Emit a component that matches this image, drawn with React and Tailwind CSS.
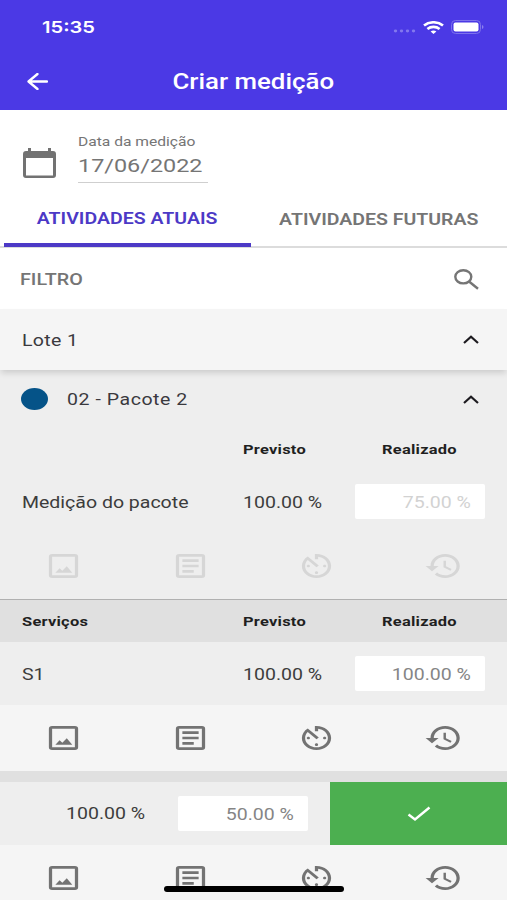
import React from 'react';
import clsx from 'clsx';

/**
 * A single line of text in the wide face used all over the app.
 */
function Label({children, className}) {
  return (
    <span className={clsx('inline-block whitespace-nowrap scale-x-[1.219] leading-none', className)}>{children}</span>
  );
}

function ImageIcon() {
  return (
    <svg className="w-[39px] h-8" viewBox="0 0 24 24" preserveAspectRatio="none" fill="currentColor">
      <path
        fillRule="evenodd"
        d="M5 3h14a2 2 0 0 1 2 2v14a2 2 0 0 1-2 2H5a2 2 0 0 1-2-2V5a2 2 0 0 1 2-2zm0 2v14h14V5H5z"
      />
      <path d="M7 17l2.6-3.4 1.7 1.9 2.7-3.4 3.4 4.9z" />
    </svg>
  );
}

function ArticleIcon() {
  return (
    <svg className="w-[39px] h-8" viewBox="0 0 24 24" preserveAspectRatio="none" fill="currentColor">
      <path
        fillRule="evenodd"
        d="M5 3h14a2 2 0 0 1 2 2v14a2 2 0 0 1-2 2H5a2 2 0 0 1-2-2V5a2 2 0 0 1 2-2zm0 2v14h14V5H5z"
      />
      <path d="M7 7h10v2H7zM7 11h10v2H7zM7 15h7v2H7z" />
    </svg>
  );
}

function TimerIcon() {
  return (
    <svg className="w-[39px] h-8" viewBox="0 0 24 24" preserveAspectRatio="none" fill="currentColor">
      <path d="M11 17c0 .55.45 1 1 1s1-.45 1-1-.45-1-1-1-1 .45-1 1zm0-14v4h2V5.08c3.39.49 6 3.39 6 6.92 0 3.87-3.13 7-7 7s-7-3.13-7-7c0-1.68.59-3.22 1.58-4.42L12 13l1.41-1.41-6.8-6.8v.02C4.42 6.45 3 9.05 3 12c0 4.97 4.02 9 9 9 4.97 0 9-4.03 9-9s-4.03-9-9-9h-1zm7 9c0-.55-.45-1-1-1s-1 .45-1 1 .45 1 1 1 1-.45 1-1zM6 12c0 .55.45 1 1 1s1-.45 1-1-.45-1-1-1-1 .45-1 1z" />
    </svg>
  );
}

function HistoryIcon() {
  return (
    <svg className="w-[39px] h-8" viewBox="0 0 24 24" preserveAspectRatio="none" fill="currentColor">
      <path d="M13 3c-4.97 0-9 4.03-9 9H1l3.89 3.89.07.14L9 12H6c0-3.87 3.13-7 7-7s7 3.13 7 7-3.13 7-7 7c-1.93 0-3.68-.79-4.94-2.06l-1.42 1.42C8.27 19.99 10.51 21 13 21c4.97 0 9-4.03 9-9s-4.03-9-9-9zm-1 5v5l4.28 2.54.72-1.21-3.5-2.08V8H12z" />
    </svg>
  );
}

function ChevronUp() {
  return (
    <svg className="w-4 h-[9px] mr-7" viewBox="0 0 16 9" fill="none" stroke="#1d1b20" strokeWidth="2.2">
      <path d="M1 8l7-6.2L15 8" />
    </svg>
  );
}

function Actions({className}) {
  return (
    <div className={clsx('grid grid-cols-4 place-items-center shrink-0', className)}>
      <ImageIcon />
      <ArticleIcon />
      <TimerIcon />
      <HistoryIcon />
    </div>
  );
}

function ColumnTitles({title, className}) {
  return (
    <div
      className={clsx(
        'flex items-center shrink-0 pl-[22px] pt-px text-[13.5px] tracking-[0.2px] font-bold text-[#1f1f1f]',
        className,
      )}
    >
      <div className="w-[221px]">
        <Label className="origin-left">{title}</Label>
      </div>
      <div className="w-[139px]">
        <Label className="origin-left">Previsto</Label>
      </div>
      <Label className="origin-left">Realizado</Label>
    </div>
  );
}

function Amount({value, disabled}) {
  return (
    <div
      className={clsx(
        'flex items-center justify-end w-[130px] h-[35px] pt-0.5 pr-3.5 bg-white rounded-xs text-[16px]',
        disabled ? 'text-[#d2d2d2]' : 'text-[#858585]',
      )}
    >
      <Label className="origin-right">{value}</Label>
    </div>
  );
}

function Measure({name, planned, done, disabled, className}) {
  return (
    <div className={clsx('flex items-center shrink-0 pl-[22px] text-[16px] text-[#3c3c3c]', className)}>
      <div className="w-[221px] pt-0.5">
        <Label className="origin-left">{name}</Label>
      </div>
      <div className="w-[112px] pt-0.5">
        <Label className="origin-left">{planned}</Label>
      </div>
      <Amount value={done} disabled={disabled} />
    </div>
  );
}

function Header() {
  return (
    <header className="h-[110px] shrink-0 bg-[#4b39e5] text-white">
      <div className="flex items-center justify-between h-[54px] pl-[42px] pr-[23px]">
        <Label className="origin-left pt-px font-['Inter'] font-semibold text-[16.5px]">15:35</Label>
        <div className="flex items-center">
          <svg className="w-6 h-3 mt-1 mr-1.5" viewBox="0 0 24 12" fill="#8378ee">
            <ellipse cx="2.500" cy="8" rx="1.700" ry="1.400" />
            <ellipse cx="8.500" cy="8" rx="1.700" ry="1.400" />
            <ellipse cx="14.500" cy="8" rx="1.700" ry="1.400" />
            <ellipse cx="20.500" cy="8" rx="1.700" ry="1.400" />
          </svg>
          <svg className="w-[21px] h-[13px] mr-[7px]" viewBox="0 0 21 13" fill="none" stroke="white" strokeWidth="2.6">
            <path d="M1 4.500C6.200.2 14.800.2 20 4.500" />
            <path d="M4.400 8c3.500-2.800 8.700-2.800 12.200 0" />
            <path d="M7.600 10.500c1.800-1.300 4-1.300 5.800 0L10.500 13z" fill="white" stroke="none" />
          </svg>
          <svg className="w-[33px] h-[14px]" viewBox="0 0 33 14">
            <rect x=".5" y=".5" width="29" height="13" rx="4" fill="none" stroke="#7d71ec" />
            <rect x="2.5" y="2.5" width="25" height="9" rx="2" fill="white" />
            <path d="M31 5c2 .7 2 3.300 0 4z" fill="#8b80ee" />
          </svg>
        </div>
      </div>
      <div className="grid grid-cols-[1fr_auto_1fr] items-center h-[54px]">
        <svg
          className="w-[21px] h-[17px] ml-[27px]"
          viewBox="0 0 21 17"
          fill="none"
          stroke="white"
          strokeWidth="2.3"
          strokeLinecap="round"
          strokeLinejoin="round"
        >
          <path d="M20 8.500H1.500M10.500 1L1.500 8.500l9 7.500" />
        </svg>
        <Label className="pt-0.5 text-[21.200px] font-medium">Criar medição</Label>
      </div>
    </header>
  );
}

export default function App() {
  return (
    <div className="relative flex flex-col w-[507px] h-[900px] overflow-hidden bg-white font-['Roboto',sans-serif]">
      <Header />

      <div className="flex h-[77px] shrink-0 pl-[23px]">
        <svg className="w-[33px] h-[30px] mt-[38px]" viewBox="0 0 33 30" fill="#727272">
          <path
            fillRule="evenodd"
            d="M5 0h3v3h17V0h3v3h2a3 3 0 0 1 3 3v21a3 3 0 0 1-3 3H3a3 3 0 0 1-3-3V6a3 3 0 0 1 3-3h2zM3 10v17.500h27V10z"
          />
        </svg>
        <div className="flex flex-col w-[130px] h-[73px] ml-[22px] pt-[26px] border-b border-[#cfcfcf] text-[#757575]">
          <Label className="origin-left self-start text-[12.8px]">Data da medição</Label>
          <Label className="origin-left self-start mt-[7px] text-[19.2px]">17/06/2022</Label>
        </div>
      </div>

      <div className="flex h-[61px] shrink-0 border-b-2 border-[#dcdcdc] text-[16px] font-semibold">
        <div className="flex justify-center w-[247px] h-[60px] ml-1 pt-6 border-b-4 border-[#4c39c6] text-[#4c39c6]">
          <Label>ATIVIDADES ATUAIS</Label>
        </div>
        <div className="flex justify-center grow pt-[25px] text-[#757575]">
          <Label>ATIVIDADES FUTURAS</Label>
        </div>
      </div>

      <div className="flex items-center justify-between h-[61px] shrink-0 pl-5 pr-7 pt-0.5 text-[#757575]">
        <Label className="origin-left pt-px text-[16.200px] font-medium">FILTRO</Label>
        <svg className="w-[25px] h-[21px]" viewBox="0 0 25 21" fill="none" stroke="currentColor" strokeWidth="2.4">
          <ellipse cx="9.300" cy="7.800" rx="8" ry="6.600" />
          <path d="M15 12.500l9 7.300" />
        </svg>
      </div>

      <div className="z-10 flex items-center justify-between h-[61px] shrink-0 pl-[22px] bg-[#f5f5f5] shadow-[0_4px_6px_-1px_rgba(0,0,0,0.14)] text-[16px] tracking-[0.3px] text-[#3a393e]">
        <Label className="origin-left pt-0.5">Lote 1</Label>
        <ChevronUp />
      </div>

      <section className="flex flex-col shrink-0 h-[230px] bg-[#eeeeee] border-b border-[#b0b0b0]">
        <div className="flex items-center h-[59px] pl-[21px] text-[16px] tracking-[0.45px] text-[#3a393e]">
          <div className="w-[27px] h-[22px] mr-[19px] rounded-[50%] bg-[#055388]" />
          <Label className="origin-left mr-auto pt-px">02 - Pacote 2</Label>
          <ChevronUp />
        </div>
        <ColumnTitles className="h-[42px]" />
        <Measure className="h-[63px]" name="Medição do pacote" planned="100.00 %" done="75.00 %" disabled />
        <Actions className="h-[66px] text-[#d6d6d6]" />
      </section>

      <ColumnTitles className="h-[42px] bg-[#e0e0e0]" title="Serviços" />
      <Measure className="h-[63px] bg-[#eeeeee]" name="S1" planned="100.00 %" done="100.00 %" />
      <Actions className="h-[66px] bg-[#f5f5f5] text-[#737373]" />
      <div className="h-[11px] shrink-0 bg-[#e0e0e0]" />

      {/* row swiped to the left, with its confirm action showing */}
      <div className="flex items-center h-[63px] shrink-0 pl-[66px] bg-[#eeeeee] text-[16px] text-[#3c3c3c]">
        <div className="w-[112px]">
          <Label className="origin-left">100.00 %</Label>
        </div>
        <Amount value="50.00 %" />
        <div className="flex items-center justify-center grow h-full ml-[22px] bg-[#4caf50]">
          <svg className="w-6 h-4" viewBox="0 0 24 16" fill="none" stroke="white" strokeWidth="2.4">
            <path d="M1.500 8.500l6.500 5L22.500 1.500" />
          </svg>
        </div>
      </div>
      <Actions className="h-[66px] bg-[#f5f5f5] text-[#737373]" />

      <div className="absolute left-[164px] bottom-2 w-[180px] h-[6px] rounded-full bg-black" />
    </div>
  );
}
